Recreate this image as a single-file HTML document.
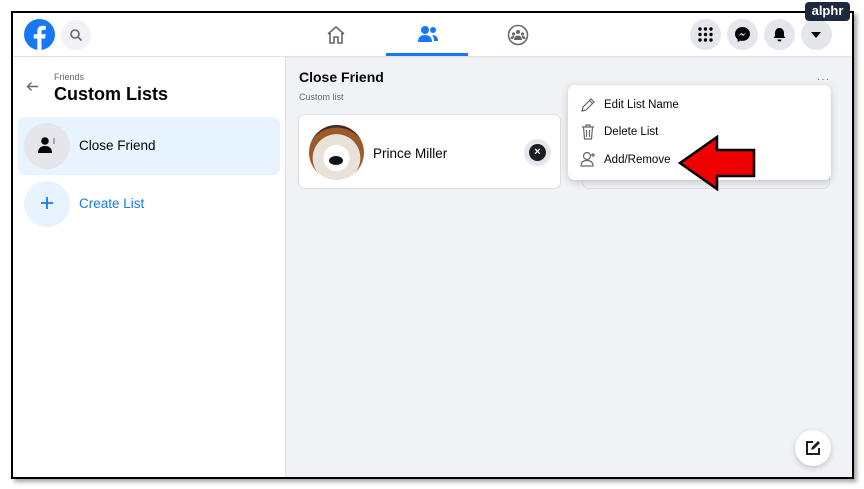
<!DOCTYPE html>
<html><head><style>
*{margin:0;padding:0;box-sizing:border-box}
body{width:864px;height:489px;background:#fff;font-family:"Liberation Sans",sans-serif;position:relative;overflow:hidden}
.frame{position:absolute;left:11px;top:11px;width:843px;height:468px;border:2px solid #000;box-shadow:3px 3px 4px rgba(0,0,0,.35);background:#f0f2f5;overflow:hidden}
.hdr{position:absolute;left:0;top:0;width:839px;height:43px;background:#fff;box-shadow:0 1px 2px rgba(0,0,0,.1)}
.circ{position:absolute;border-radius:50%;background:#e4e6eb}
.left{position:absolute;left:0;top:44px;width:273px;height:420px;background:#fff;border-right:1px solid #ddd}
.abs{position:absolute}
</style></head><body>
<div class="frame">
 <div class="hdr">
  <svg class="abs" style="left:11px;top:6px" width="31" height="31" viewBox="0 0 31 31"><circle cx="15.5" cy="15.5" r="15.5" fill="#1877f2"/><path d="M17.5 31V19.5h3.6l.6-4.2h-4.2v-2.6c0-1.2.4-2 2.1-2h2.2V7c-.4 0-1.7-.2-3.2-.2-3.2 0-5.3 1.9-5.3 5.5v3h-3.5v4.2h3.5V31z" fill="#fff"/></svg>
  <div class="circ" style="left:48px;top:7px;width:30px;height:30px;background:#f0f2f5"></div>
  <svg class="abs" style="left:56px;top:15px" width="14" height="14" viewBox="0 0 14 14"><circle cx="6" cy="6" r="4" fill="none" stroke="#65676b" stroke-width="1.6"/><path d="M9 9l3.5 3.5" stroke="#65676b" stroke-width="1.6"/></svg>
  <svg class="abs" style="left:313px;top:12px" width="20" height="20" viewBox="0 0 20 20"><path d="M2 9L10 2l8 7M4 8v10h4v-6h4v6h4V8" fill="none" stroke="#65676b" stroke-width="1.6" stroke-linejoin="round"/></svg>
  <svg class="abs" style="left:404px;top:12px" width="22" height="18" viewBox="0 0 22 18"><circle cx="8" cy="5" r="4" fill="#1877f2"/><path d="M1 17c0-5 3-7 7-7s7 2 7 7z" fill="#1877f2"/><circle cx="16" cy="5" r="3" fill="#1877f2"/><path d="M15 10c4 0 6 2 6 6h-4c0-3-1-5-2-6z" fill="#1877f2"/></svg>
  <div class="abs" style="left:373px;top:40px;width:82px;height:3px;background:#1877f2"></div>
  <svg class="abs" style="left:494px;top:11px" width="22" height="22" viewBox="0 0 22 22"><circle cx="11" cy="11" r="9.5" fill="none" stroke="#65676b" stroke-width="1.6"/><circle cx="11" cy="8" r="2" fill="#65676b"/><circle cx="6.5" cy="10" r="1.6" fill="#65676b"/><circle cx="15.5" cy="10" r="1.6" fill="#65676b"/><path d="M7 16c0-3 2-4.5 4-4.5s4 1.5 4 4.5zM3.5 15c0-2 1-3 3-3l1 .3-1.5 2.7zM18.5 15c0-2-1-3-3-3l-1 .3 1.5 2.7z" fill="#65676b"/></svg>
  <div class="circ" style="left:677px;top:6px;width:31px;height:31px"></div>
  <svg class="abs" style="left:685px;top:14px" width="15" height="15" viewBox="0 0 15 15" fill="#050505"><circle cx="2" cy="2" r="1.7"/><circle cx="7.5" cy="2" r="1.7"/><circle cx="13" cy="2" r="1.7"/><circle cx="2" cy="7.5" r="1.7"/><circle cx="7.5" cy="7.5" r="1.7"/><circle cx="13" cy="7.5" r="1.7"/><circle cx="2" cy="13" r="1.7"/><circle cx="7.5" cy="13" r="1.7"/><circle cx="13" cy="13" r="1.7"/></svg>
  <div class="circ" style="left:714px;top:6px;width:31px;height:31px"></div>
  <svg class="abs" style="left:721px;top:13px" width="17" height="17" viewBox="0 0 17 17"><path d="M8.5 1C4.4 1 1 4 1 8c0 2.2 1 4 2.7 5.3V16l2.5-1.4c.7.2 1.5.3 2.3.3 4.1 0 7.5-3 7.5-7S12.6 1 8.5 1z" fill="#050505"/><path d="M4.5 10l3-3.2 1.6 1.6 3-1.6-3 3.2-1.6-1.6z" fill="#e4e6eb"/></svg>
  <div class="circ" style="left:751px;top:6px;width:31px;height:31px"></div>
  <svg class="abs" style="left:759px;top:14px" width="15" height="15" viewBox="0 0 15 15"><path d="M7.5 1C4.5 1 3 3.5 3 6v3L1.5 11h12L12 9V6c0-2.5-1.5-5-4.5-5zM5.5 12.5a2 2 0 0 0 4 0z" fill="#050505"/></svg>
  <div class="circ" style="left:788px;top:6px;width:31px;height:31px"></div>
  <svg class="abs" style="left:798px;top:19px" width="10" height="6" viewBox="0 0 10 6"><path d="M0 0h10L5 6z" fill="#050505"/></svg>
 </div>
 <div class="left">
  <svg class="abs" style="left:13px;top:24px" width="13" height="11" viewBox="0 0 13 11"><path d="M12 5.5H1.5M5.5 1.5L1.5 5.5l4 4" fill="none" stroke="#65676b" stroke-width="1.4"/></svg>
  <div class="abs" style="left:41px;top:15px;font-size:9px;color:#65676b">Friends</div>
  <div class="abs" style="left:41px;top:27px;font-size:18px;font-weight:bold;color:#050505">Custom Lists</div>
  <div class="abs" style="left:5px;top:60px;width:262px;height:58px;background:#e7f3ff;border-radius:7px"></div>
  <div class="circ" style="left:11px;top:66px;width:46px;height:46px"></div>
  <svg class="abs" style="left:25px;top:79px" width="18" height="18" viewBox="0 0 18 18"><circle cx="7" cy="5" r="3.8" fill="#050505"/><path d="M0 17c0-5 3-7 7-7s7 2 7 7z" fill="#050505"/><path d="M15 3h2M15 5h2M15 7h2" stroke="#65676b" stroke-width="1"/></svg>
  <div class="abs" style="left:66px;top:81px;font-size:13.5px;color:#050505">Close Friend</div>
  <div class="circ" style="left:11px;top:124px;width:46px;height:46px;background:#e7f3ff"></div>
  <svg class="abs" style="left:27px;top:139px" width="14" height="14" viewBox="0 0 14 14"><path d="M7 1v12M1 7h12" stroke="#1877f2" stroke-width="1.8"/></svg>
  <div class="abs" style="left:66px;top:139px;font-size:13.5px;color:#1877f2">Create List</div>
 </div>
 <div class="abs" style="left:286px;top:56px;font-size:14px;font-weight:bold;color:#050505">Close Friend</div>
 <div class="abs" style="left:286px;top:79px;font-size:9px;color:#65676b">Custom list</div>
 <div class="abs" style="left:285px;top:101px;width:263px;height:75px;background:#fff;border:1px solid #dadde1;border-radius:7px"></div>
 <div class="abs" style="left:296px;top:112px;width:55px;height:55px;border-radius:50%;background:radial-gradient(circle at 50% 60%,#fff 0 30%,#e8e2d8 31% 55%,#9c5a2a 56% 70%,#3a2a20 72%)"></div>
 <div class="abs" style="left:316px;top:143px;width:14px;height:9px;border-radius:50%;background:#111"></div>
 <div class="abs" style="left:360px;top:133px;font-size:13.5px;color:#050505">Prince Miller</div>
 <div class="circ" style="left:511px;top:126px;width:27px;height:27px;background:#e4e6eb"></div>
 <div class="abs" style="left:516px;top:131px;width:17px;height:17px;border-radius:50%;background:#1c1e21;color:#fff;font-size:11px;font-weight:bold;text-align:center;line-height:17px">×</div>
 <div class="abs" style="left:569px;top:101px;width:248px;height:75px;border:1px solid #dadde1;border-radius:7px"></div>
 <div class="abs" style="left:804px;top:61px;font-size:10px;color:#65676b;letter-spacing:1px">···</div>
 <div class="abs" style="left:555px;top:72px;width:263px;height:95px;background:#fff;border-radius:7px;box-shadow:0 2px 8px rgba(0,0,0,.2)"></div>
 <svg class="abs" style="left:567px;top:84px" width="16" height="16" viewBox="0 0 16 16"><path d="M2 14l1-4 8-8 3 3-8 8zM9.5 3.5l3 3" fill="none" stroke="#65676b" stroke-width="1.2"/></svg>
 <div class="abs" style="left:591px;top:86px;font-size:11.5px;color:#050505">Edit List Name</div>
 <svg class="abs" style="left:568px;top:111px" width="14" height="16" viewBox="0 0 14 16"><path d="M1 3h12M5 3V1h4v2M2.5 3l1 12h7l1-12M5.5 6v7M8.5 6v7" fill="none" stroke="#65676b" stroke-width="1.2"/></svg>
 <div class="abs" style="left:591px;top:113px;font-size:11.5px;color:#050505">Delete List</div>
 <svg class="abs" style="left:567px;top:138px" width="17" height="16" viewBox="0 0 17 16"><circle cx="7" cy="5" r="3.5" fill="none" stroke="#65676b" stroke-width="1.2"/><path d="M1 15c0-4 2.5-5.5 6-5.5s6 1.5 6 5.5z" fill="none" stroke="#65676b" stroke-width="1.2"/><path d="M13 2v4M11 4h4" stroke="#65676b" stroke-width="1.2"/></svg>
 <div class="abs" style="left:591px;top:141px;font-size:11.5px;color:#050505">Add/Remove</div>
 <svg class="abs" style="left:664px;top:122px" width="80" height="56" viewBox="0 0 80 56"><path d="M3 28L40 2v13h37v26H40v13z" fill="#ee0000" stroke="#000" stroke-width="2.5"/></svg>
 <div class="abs" style="left:782px;top:417px;width:36px;height:36px;border-radius:50%;background:#fff;box-shadow:0 2px 6px rgba(0,0,0,.2)"></div>
 <svg class="abs" style="left:792px;top:427px" width="16" height="16" viewBox="0 0 16 16"><path d="M8 2H2v12h12V8" fill="none" stroke="#1c1e21" stroke-width="2"/><path d="M6 10l1-3 6-6 2 2-6 6z" fill="#1c1e21"/></svg>
</div>
<div class="abs" style="left:805px;top:2px;width:45px;height:19px;background:#1d2a3d;border-radius:4px;color:#fff;font-size:13px;text-align:center;line-height:18px;font-weight:bold">alphr</div>
</body></html>
